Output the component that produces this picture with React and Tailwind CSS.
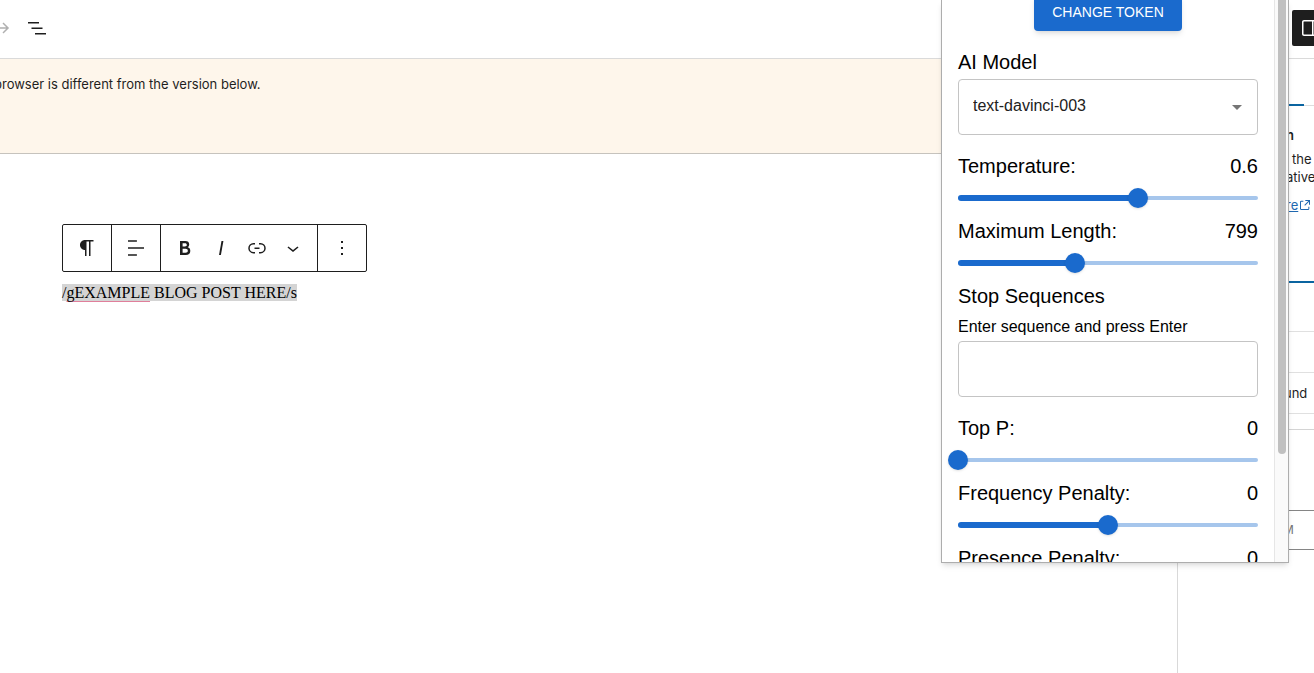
import { useState } from "react";

const icons = {
  redo: "m14.5 6.5-1 1 3.7 3.7H4v1.6h13.2l-3.7 3.7 1 1 5.6-5.5z",
  listView: "M3 6h11v1.5H3V6Zm3.5 5.5h11V13h-11v-1.5ZM21 17H10v1.5h11V17Z",
  drawer:
    "M18 4H6c-1.1 0-2 .9-2 2v12c0 1.1.9 2 2 2h12c1.1 0 2-.9 2-2V6c0-1.1-.9-2-2-2zm-4 14.5H6c-.3 0-.5-.2-.5-.5V6c0-.3.2-.5.5-.5h8v13zm4.5-.5c0 .3-.2.5-.5.5h-2.5v-13H18c.3 0 .5.2.5.5v12z",
  paragraph:
    "m9.99609 14v-.2251l.00391.0001v6.225h1.5v-14.5h2.5v14.5h1.5v-14.5h3v-1.5h-8.50391c-2.76142 0-5 2.23858-5 5 0 2.7614 2.23858 5 5 5z",
  alignLeft:
    "M4 19.8h8.9v-1.5H4v1.5zm8.9-15.6H4v1.5h8.9V4.2zm-8.9 7v1.5h16v-1.5H4z",
  bold: "M14.7 11.3c1-.6 1.5-1.6 1.5-3 0-2.3-1.3-3.4-4-3.4H7v14h5.8c1.4 0 2.5-.3 3.3-1 .8-.7 1.2-1.7 1.2-2.9.1-1.9-.8-3.1-2.6-3.7zm-5.1-4h2.3c.6 0 1.1.1 1.4.4.3.3.5.7.5 1.2s-.2 1-.5 1.2c-.3.3-.8.4-1.4.4H9.6V7.3zm4.6 9c-.4.3-1 .4-1.7.4H9.6v-3.9h2.9c.7 0 1.3.2 1.7.5.4.3.6.8.6 1.5s-.2 1.2-.6 1.5z",
  italic: "M12.5 5L10 19h1.9l2.5-14z",
  link: "M10 17.389H8.444A5.194 5.194 0 1 1 8.444 7H10v1.5H8.444a3.694 3.694 0 0 0 0 7.389H10v1.5ZM14 7h1.556a5.194 5.194 0 0 1 0 10.39H14v-1.5h1.556a3.694 3.694 0 0 0 0-7.39H14V7Zm-4.5 6h5v-1.5h-5V13Z",
  chevron: "M17.5 11.6L12 16l-5.5-4.4.9-1.2L12 14l4.5-3.6 1 1.2z",
  more: "M13 19h-2v-2h2v2zm0-6h-2v-2h2v2zm0-6h-2V5h2v2z",
  external:
    "M19.5 4.5h-7V6h4.44l-5.97 5.97 1.06 1.06L18 7.06v4.44h1.5v-7Zm-13 1a2 2 0 0 0-2 2v10a2 2 0 0 0 2 2h10a2 2 0 0 0 2-2v-3H17v3a.5.5 0 0 1-.5.5h-10a.5.5 0 0 1-.5-.5v-10a.5.5 0 0 1 .5-.5h3V5.5h-3Z",
};

function Icon({ name, className = "size-6" }) {
  return (
    <svg viewBox="0 0 24 24" fill="currentColor" className={className}>
      <path d={icons[name]} />
    </svg>
  );
}

function ToolButton({ icon, label }) {
  return (
    <button
      aria-label={label}
      className="flex h-full w-9 shrink-0 items-center justify-center"
    >
      <Icon name={icon} />
    </button>
  );
}

function ParamSlider({ id, label, min, max, step, initial }) {
  const [value, setValue] = useState(initial);
  const percent = ((value - min) / (max - min)) * 100;

  return (
    <div className="pb-0.5">
      <div className="flex justify-between text-xl/[31px]">
        <label htmlFor={id}>{label}</label>
        <output htmlFor={id}>{value}</output>
      </div>
      <div className="relative flex h-8 items-center">
        <div className="h-1 w-full rounded-full bg-[#a6c6ec]" />
        <div
          className="absolute left-0 h-1.5 rounded-full bg-[#1a6acd]"
          style={{ width: `${percent}%` }}
        />
        <div
          className="absolute size-5 -translate-x-1/2 rounded-full bg-[#1a6acd] shadow"
          style={{ left: `${percent}%` }}
        />
        <input
          id={id}
          type="range"
          min={min}
          max={max}
          step={step}
          value={value}
          onChange={(e) => setValue(Number(e.target.value))}
          className="absolute inset-0 w-full cursor-pointer opacity-0"
        />
      </div>
    </div>
  );
}

function SettingsPopup() {
  return (
    <div className="absolute top-0 right-[25px] flex h-[563px] w-[348px] overflow-hidden border-x border-b border-[#adadad] bg-white font-['Liberation_Sans',Arial,sans-serif] text-black shadow-md">
      <div className="-mt-[5px] flex-1 px-4">
        <div className="flex justify-center">
          <button className="h-9 w-[148px] rounded bg-[#1a6acd] pb-0.5 text-sm font-medium text-white shadow-md">
            CHANGE TOKEN
          </button>
        </div>

        <div className="mt-[15px]">
          <label htmlFor="model" className="block text-xl/[33px]">
            AI Model
          </label>
          <div className="relative">
            <select
              id="model"
              className="h-14 w-full appearance-none rounded border border-[#c4c4c4] bg-white px-3.5 pb-0.5 text-base text-[#212121]"
            >
              <option>text-davinci-003</option>
            </select>
            <svg
              viewBox="0 0 24 24"
              className="pointer-events-none absolute top-4 right-[9px] size-6 fill-[#757575]"
            >
              <path d="M7 10l5 5 5-5z" />
            </svg>
          </div>
        </div>

        <div className="mt-4">
          <ParamSlider
            id="temperature"
            label="Temperature:"
            min={0}
            max={1}
            step={0.1}
            initial={0.6}
          />
          <ParamSlider
            id="max-length"
            label="Maximum Length:"
            min={0}
            max={2048}
            step={1}
            initial={799}
          />
        </div>

        <h2 className="text-xl/[31px]">Stop Sequences</h2>
        <label htmlFor="stop" className="block text-base/[29px]">
          Enter sequence and press Enter
        </label>
        <input
          id="stop"
          type="text"
          className="block h-14 w-full rounded border border-[#c4c4c4] px-3.5"
        />

        <div className="mt-4">
          <ParamSlider
            id="top-p"
            label="Top P:"
            min={0}
            max={1}
            step={0.1}
            initial={0}
          />
          <ParamSlider
            id="frequency"
            label="Frequency Penalty:"
            min={-2}
            max={2}
            step={0.1}
            initial={0}
          />
          <ParamSlider
            id="presence"
            label="Presence Penalty:"
            min={-2}
            max={2}
            step={0.1}
            initial={0}
          />
        </div>
      </div>

      {/* scrollbar */}
      <div className="w-3.5 shrink-0 border-l border-[#e6e6e6] bg-[#fafafa] px-[3px]">
        <div className="h-[454px] w-2 rounded-b-full bg-[#c0c0c0]" />
      </div>
    </div>
  );
}

function BlockToolbar() {
  return (
    <div className="flex h-12 w-fit divide-x divide-[#1e1e1e] rounded-xs border border-[#1e1e1e] bg-white">
      <div className="flex px-1.5">
        <ToolButton icon="paragraph" label="Paragraph" />
      </div>
      <div className="flex px-1.5">
        <ToolButton icon="alignLeft" label="Align" />
      </div>
      <div className="flex px-1.5">
        <ToolButton icon="bold" label="Bold" />
        <ToolButton icon="italic" label="Italic" />
        <ToolButton icon="link" label="Link" />
        <ToolButton icon="chevron" label="More formatting" />
      </div>
      <div className="flex px-1.5">
        <ToolButton icon="more" label="Options" />
      </div>
    </div>
  );
}

function Sidebar() {
  return (
    <aside className="w-[137px] shrink-0 overflow-hidden border-l border-[#d9d9d9] bg-white text-[13px]/[18px]">
      <div className="flex h-[47px] border-b border-[#dddddd]">
        <div className="-mb-px w-[126px] border-b-2 border-[#0a64a0]" />
      </div>
      <div className="h-[177px] border-b-2 border-[#0a64a0] pt-5 pl-[108px]">
        <h2 className="font-semibold">n</h2>
        <p className="mt-1.5">
          <span className="pl-1.5">the</span>
          <br />
          ative
        </p>
        <a href="#" className="mt-2.5 flex items-center text-[#1f68b0]">
          <span className="underline">re</span>
          <Icon name="external" className="-ml-px size-4 shrink-0" />
        </a>
      </div>
      <div className="h-[49px] border-b border-[#e0e0e0]" />
      <div className="h-[41px] border-b border-[#e0e0e0]" />
      <div className="flex h-[41px] items-center border-b border-[#e0e0e0] pl-[106px]">
        und
      </div>
      <div className="h-4 border-b border-[#d4d4d4]" />
      <div className="mt-20 flex h-10 items-center border-y border-[#858585] pl-[105px] text-xs text-[#757575]">
        M
      </div>
    </aside>
  );
}

export default function App() {
  return (
    <div className="relative flex min-h-screen flex-col overflow-hidden bg-white font-[Inter,sans-serif] text-[#1e1e1e]">
      <header className="flex h-[59px] items-center justify-between border-b border-[#dadada] pb-0.5">
        <div className="-ml-[17px] flex h-9">
          <button
            aria-label="Redo"
            className="flex w-9 items-center justify-center text-[#b0b0b0]"
          >
            <Icon name="redo" />
          </button>
          <ToolButton icon="listView" label="Document overview" />
        </div>
        <button
          aria-label="Settings"
          className="-mr-3.5 flex size-9 items-center justify-center rounded-xs bg-[#1e1e1e] text-white"
        >
          <Icon name="drawer" />
        </button>
      </header>

      <div className="flex flex-1">
        <main className="min-w-0 flex-1">
          <div className="h-[95px] border-b border-[#c6c3bd] bg-[#fef6eb] pt-4">
            <p className="-ml-1.5 text-[13px]/[19px]">
              browser is different from the version below.
            </p>
          </div>
          <div className="px-[62px] pt-[70px]">
            <BlockToolbar />
            <p className="mt-3 font-['Liberation_Serif',serif] text-base/[18px] text-black">
              <span className="bg-[#d4d4d4]">
                /
                <span className="underline decoration-[#e07f9b] decoration-1 underline-offset-3">
                  gEXAMPLE
                </span>{" "}
                BLOG POST HERE/s
              </span>
            </p>
          </div>
        </main>
        <Sidebar />
      </div>

      <SettingsPopup />
    </div>
  );
}
